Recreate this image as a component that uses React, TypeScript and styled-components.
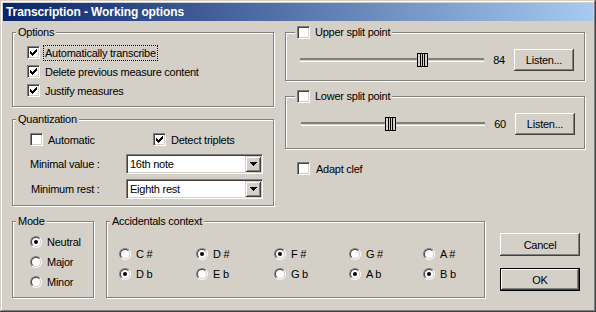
import React from 'react';
import styled, { createGlobalStyle } from 'styled-components';

const BG = '#d4d0c8';

const GlobalStyle = createGlobalStyle`
  html, body {
    margin: 0;
    padding: 0;
    background: ${BG};
  }
  body {
    font-family: 'Liberation Sans', Arial, sans-serif;
    font-size: 11px;
    letter-spacing: -0.25px;
    color: #000;
  }
  * {
    box-sizing: border-box;
  }
`;

const Window = styled.div`
  width: 596px;
  height: 312px;
  padding: 3px;
  background: ${BG};
  box-shadow:
    inset -1px -1px 0 #404040,
    inset 1px 1px 0 ${BG},
    inset -2px -2px 0 #808080,
    inset 2px 2px 0 #fff;
  display: flex;
  flex-direction: column;
`;

const TitleBar = styled.div`
  height: 18px;
  flex: none;
  padding-left: 3px;
  display: flex;
  align-items: center;
  background: linear-gradient(to right, #0a246a, #a6caf0);
  color: #fff;
  font-weight: bold;
  font-size: 12px;
  letter-spacing: -0.1px;
`;

const Body = styled.div`
  padding: 11px 0 0 9px;
  display: flex;
  flex-direction: column;
`;

const TopArea = styled.div`
  display: grid;
  grid-template-columns: 262px 300px;
  column-gap: 11px;
  align-items: start;
`;

const Column = styled.div`
  display: flex;
  flex-direction: column;
`;

const BottomArea = styled.div`
  margin-top: 15px;
  display: flex;
  align-items: flex-start;
`;

const GroupBox = styled.div<{ $w?: number; $h: number; $mt?: number; $ml?: number }>`
  width: ${p => (p.$w ? `${p.$w}px` : 'auto')};
  height: ${p => p.$h}px;
  margin: ${p => p.$mt || 0}px 0 0 ${p => p.$ml || 0}px;
  flex: none;
  border: 1px solid #808080;
  box-shadow: 1px 1px 0 #fff, inset 1px 1px 0 #fff;
  display: flex;
  flex-direction: column;
`;

const Caption = styled.div<{ $indent: number }>`
  margin: -7px 0 0 ${p => p.$indent}px;
  padding: 0 2px;
  width: fit-content;
  height: 13px;
  line-height: 13px;
  background: ${BG};
  display: flex;
  align-items: center;
  gap: 5px;
`;

const CheckList = styled.div`
  padding: 4px 0 0 14px;
  display: flex;
  flex-direction: column;
`;

const CheckRow = styled.div<{ $h?: number; $w?: number }>`
  height: ${p => p.$h || 19}px;
  width: ${p => (p.$w ? `${p.$w}px` : 'auto')};
  display: flex;
  align-items: center;
  gap: 4px;
`;

const Label = styled.span<{ $focus?: boolean }>`
  padding: 0 1px;
  line-height: 14px;
  white-space: nowrap;
  outline: ${p => (p.$focus ? '1px dotted #000' : 'none')};
`;

const Box = styled.span`
  width: 13px;
  height: 13px;
  flex: none;
  background: #fff;
  border: 1px solid;
  border-color: #808080 #fff #fff #808080;
  box-shadow: inset 1px 1px 0 #404040, inset -1px -1px 0 ${BG};
  display: flex;
  align-items: center;
  justify-content: center;
`;

const CheckBox = ({ on }: { on?: boolean }) => (
  <Box>
    {on && (
      <svg width="7" height="7" viewBox="0 0 7 7" shapeRendering="crispEdges">
        <path
          d="M0 2h1v3H0zM1 3h1v3H1zM2 4h1v3H2zM3 3h1v3H3zM4 2h1v3H4zM5 1h1v3H5zM6 0h1v3H6z"
          fill="#000"
        />
      </svg>
    )}
  </Box>
);

const RadioOuter = styled.span`
  width: 12px;
  height: 12px;
  flex: none;
  border-radius: 50%;
  border: 1px solid;
  border-color: #808080 #fff #fff #808080;
  display: flex;
`;

const RadioInner = styled.span<{ $on?: boolean }>`
  flex: 1;
  border-radius: 50%;
  background: #fff;
  border: 1px solid;
  border-color: #404040 ${BG} ${BG} #404040;
  display: flex;
  align-items: center;
  justify-content: center;

  &::after {
    content: '';
    width: 4px;
    height: 4px;
    border-radius: 50%;
    background: ${p => (p.$on ? '#000' : 'transparent')};
  }
`;

const RadioRow = styled.div<{ $h: number }>`
  height: ${p => p.$h}px;
  display: flex;
  align-items: center;
  gap: 4px;
`;

const Radio = ({ on, label, h = 20 }: { on?: boolean; label: string; h?: number }) => (
  <RadioRow $h={h}>
    <RadioOuter>
      <RadioInner $on={on} />
    </RadioOuter>
    <Label>{label}</Label>
  </RadioRow>
);

const QuantBody = styled.div`
  padding: 7px 0 0 17px;
  display: flex;
  flex-direction: column;
`;

const QuantChecks = styled.div`
  display: flex;
  margin-bottom: 8px;
`;

const FieldRow = styled.div<{ $mb?: number }>`
  display: flex;
  align-items: center;
  margin-bottom: ${p => p.$mb || 0}px;
`;

const FieldLabel = styled.span<{ $shift?: number }>`
  width: 96px;
  padding-left: ${p => p.$shift || 0}px;
`;

const Combo = styled.div`
  width: 137px;
  height: 20px;
  padding: 1px;
  background: #fff;
  border: 1px solid;
  border-color: #808080 #fff #fff #808080;
  box-shadow: inset 1px 1px 0 #404040, inset -1px -1px 0 ${BG};
  display: flex;
  align-items: stretch;
`;

const ComboText = styled.span`
  flex: 1;
  padding-left: 2px;
  display: flex;
  align-items: center;
`;

const ComboButton = styled.span`
  width: 16px;
  background: ${BG};
  box-shadow:
    inset 1px 1px 0 ${BG},
    inset -1px -1px 0 #404040,
    inset 2px 2px 0 #fff,
    inset -2px -2px 0 #808080;
  display: flex;
  align-items: center;
  justify-content: center;
`;

const DownArrow = () => (
  <svg width="7" height="4" viewBox="0 0 7 4" shapeRendering="crispEdges">
    <path d="M0 0h7v1H0zM1 1h5v1H1zM2 2h3v1H2zM3 3h1v1H3z" fill="#000" />
  </svg>
);

const Select = ({ value }: { value: string }) => (
  <Combo>
    <ComboText>{value}</ComboText>
    <ComboButton>
      <DownArrow />
    </ComboButton>
  </Combo>
);

const Button = styled.button<{ $w: number; $h: number; $default?: boolean }>`
  width: ${p => p.$w}px;
  height: ${p => p.$h}px;
  flex: none;
  padding: 0;
  font: inherit;
  letter-spacing: inherit;
  color: #000;
  background: ${BG};
  border: ${p => (p.$default ? '1px solid #000' : 'none')};
  box-shadow:
    inset -1px -1px 0 #404040,
    inset 1px 1px 0 #fff,
    inset -2px -2px 0 #808080,
    inset 2px 2px 0 ${BG};
`;

const SliderRow = styled.div<{ $left: number }>`
  margin: 10px 0 0 ${p => p.$left}px;
  display: flex;
  align-items: center;
`;

const Track = styled.div`
  width: 184px;
  height: 14px;
  flex: none;
  display: flex;
  align-items: center;
  background: linear-gradient(
    to bottom,
    transparent 5px,
    #808080 5px,
    #808080 7px,
    ${BG} 7px,
    ${BG} 8px,
    #fff 8px,
    #fff 9px,
    transparent 9px
  );
`;

const Value = styled.span`
  width: 12px;
  margin: 0 9px;
  text-align: right;
`;

const Thumb = () => (
  <svg width="11" height="14" viewBox="0 0 11 14" shapeRendering="crispEdges" style={{ flex: 'none' }}>
    <rect x="0.5" y="0.5" width="10" height="13" fill={BG} stroke="#000" />
    <path d="M3.5 0v14M5.5 0v14M7.5 0v14" stroke="#000" />
  </svg>
);

const Slider = ({ value, left }: { value: number; left: number }) => (
  <SliderRow $left={left}>
    <Track>
      <span style={{ marginLeft: Math.round((value / 127) * 175 + 1) }} />
      <Thumb />
    </Track>
    <Value>{value}</Value>
    <Button $w={60} $h={22}>Listen...</Button>
  </SliderRow>
);

const AdaptRow = styled.div`
  margin: 13px 0 0 12px;
  height: 13px;
  display: flex;
  align-items: center;
  gap: 5px;
`;

const ModeList = styled.div`
  padding: 4px 0 0 17px;
  display: flex;
  flex-direction: column;
`;

const AccGrid = styled.div`
  margin: 16px 0 0 12px;
  display: grid;
  grid-template-columns: 77px 78px 75px 74px 1fr;
  grid-auto-rows: 20px;
`;

const ButtonColumn = styled.div`
  margin: 12px 0 0 15px;
  display: flex;
  flex-direction: column;
  gap: 12px;
`;

const sharps = [
  { label: 'C #', on: false },
  { label: 'D #', on: true },
  { label: 'F #', on: true },
  { label: 'G #', on: false },
  { label: 'A #', on: false },
];

const flats = [
  { label: 'D b', on: true },
  { label: 'E b', on: false },
  { label: 'G b', on: false },
  { label: 'A b', on: true },
  { label: 'B b', on: true },
];

export default function App() {
  return (
    <>
      <GlobalStyle />
      <Window>
        <TitleBar>Transcription - Working options</TitleBar>
        <Body>
          <TopArea>
            <Column>
              <GroupBox $h={75}>
                <Caption $indent={3}>Options</Caption>
                <CheckList>
                  <CheckRow>
                    <CheckBox on />
                    <Label $focus>Automatically transcribe</Label>
                  </CheckRow>
                  <CheckRow>
                    <CheckBox on />
                    <Label>Delete previous measure content</Label>
                  </CheckRow>
                  <CheckRow>
                    <CheckBox on />
                    <Label>Justify measures</Label>
                  </CheckRow>
                </CheckList>
              </GroupBox>
              <GroupBox $h={87} $mt={12}>
                <Caption $indent={3}>Quantization</Caption>
                <QuantBody>
                  <QuantChecks>
                    <CheckRow $h={13} $w={123}>
                      <CheckBox />
                      <Label>Automatic</Label>
                    </CheckRow>
                    <CheckRow $h={13}>
                      <CheckBox on />
                      <Label>Detect triplets</Label>
                    </CheckRow>
                  </QuantChecks>
                  <FieldRow $mb={5}>
                    <FieldLabel>Minimal value :</FieldLabel>
                    <Select value="16th note" />
                  </FieldRow>
                  <FieldRow>
                    <FieldLabel $shift={1}>Minimum rest :</FieldLabel>
                    <Select value="Eighth rest" />
                  </FieldRow>
                </QuantBody>
              </GroupBox>
            </Column>
            <Column>
              <GroupBox $h={49}>
                <Caption $indent={9}>
                  <CheckBox />
                  <span>Upper split point</span>
                </Caption>
                <Slider value={84} left={14} />
              </GroupBox>
              <GroupBox $h={53} $mt={15}>
                <Caption $indent={9}>
                  <CheckBox />
                  <span>Lower split point</span>
                </Caption>
                <Slider value={60} left={15} />
              </GroupBox>
              <AdaptRow>
                <CheckBox />
                <Label>Adapt clef</Label>
              </AdaptRow>
            </Column>
          </TopArea>
          <BottomArea>
            <GroupBox $w={82} $h={77}>
              <Caption $indent={3}>Mode</Caption>
              <ModeList>
                <Radio on label="Neutral" />
                <Radio label="Major" />
                <Radio label="Minor" />
              </ModeList>
            </GroupBox>
            <GroupBox $w={379} $h={77} $ml={12}>
              <Caption $indent={3}>Accidentals context</Caption>
              <AccGrid>
                {sharps.map(s => (
                  <Radio key={s.label} on={s.on} label={s.label} />
                ))}
                {flats.map(f => (
                  <Radio key={f.label} on={f.on} label={f.label} />
                ))}
              </AccGrid>
            </GroupBox>
            <ButtonColumn>
              <Button $w={80} $h={23}>Cancel</Button>
              <Button $w={80} $h={23} $default>OK</Button>
            </ButtonColumn>
          </BottomArea>
        </Body>
      </Window>
    </>
  );
}
